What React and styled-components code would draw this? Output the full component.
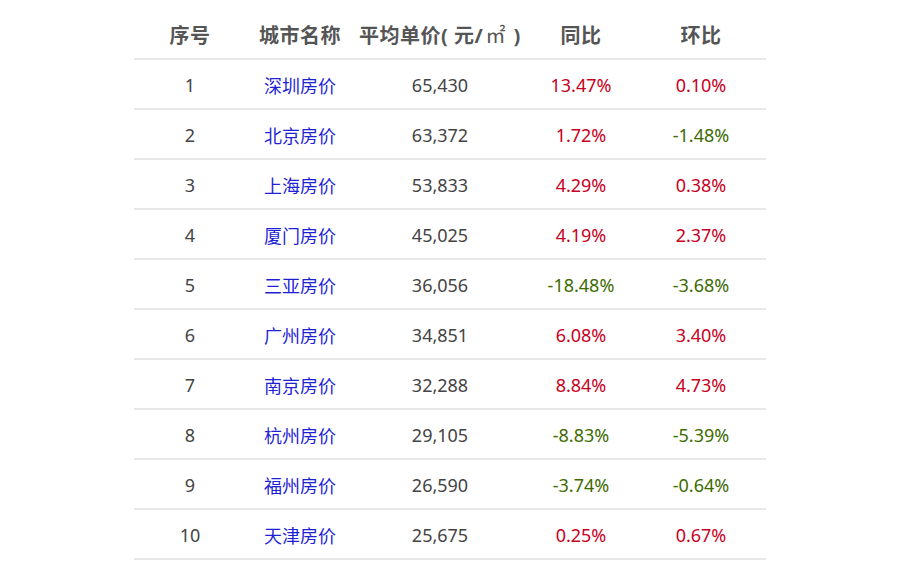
import styled, { createGlobalStyle } from "styled-components";

const rows = [
  [1, "深圳房价", "65,430", "13.47%", "0.10%"],
  [2, "北京房价", "63,372", "1.72%", "-1.48%"],
  [3, "上海房价", "53,833", "4.29%", "0.38%"],
  [4, "厦门房价", "45,025", "4.19%", "2.37%"],
  [5, "三亚房价", "36,056", "-18.48%", "-3.68%"],
  [6, "广州房价", "34,851", "6.08%", "3.40%"],
  [7, "南京房价", "32,288", "8.84%", "4.73%"],
  [8, "杭州房价", "29,105", "-8.83%", "-5.39%"],
  [9, "福州房价", "26,590", "-3.74%", "-0.64%"],
  [10, "天津房价", "25,675", "0.25%", "0.67%"],
];

const App = () => (
  <>
    <GlobalStyle />
    <Page>
      <Table>
        <HeadRow>
          <HeadCell>序号</HeadCell>
          <HeadCell>城市名称</HeadCell>
          <HeadCell>
            平均单价( 元/<Unit>㎡</Unit> )
          </HeadCell>
          <HeadCell>同比</HeadCell>
          <HeadCell>环比</HeadCell>
        </HeadRow>
        {rows.map(([n, city, price, yoy, mom]) => (
          <Row key={n}>
            <Cell>{n}</Cell>
            <Cell>
              <CityLink href="#">{city}</CityLink>
            </Cell>
            <Cell>{price}</Cell>
            <Change $down={yoy.startsWith("-")}>{yoy}</Change>
            <Change $down={mom.startsWith("-")}>{mom}</Change>
          </Row>
        ))}
      </Table>
    </Page>
  </>
);

export default App;

const GlobalStyle = createGlobalStyle`
  body {
    margin: 0;
    background: #fff;
    font-family: "Noto Sans", "Noto Sans CJK SC", sans-serif;
  }
`;

const Page = styled.div`
  width: 900px;
  height: 576px;
  padding-top: 10px;
  padding-left: 134px;
  box-sizing: border-box;
`;

const Table = styled.div`
  width: 632px;
`;

const HeadRow = styled.div`
  display: grid;
  grid-template-columns: 112px 108px 172px 110px 130px;
  height: 48px;
  align-items: center;
  border-bottom: 2px solid #e8e8e8;
`;

const HeadCell = styled.div`
  text-align: center;
  font-size: 20px;
  font-weight: 700;
  color: #555;
  white-space: nowrap;
  letter-spacing: 0.5px;
`;

const Unit = styled.span`
  font-family: "Liberation Serif", "Noto Sans CJK SC", serif;
  font-weight: 400;
  padding: 0 2px;
`;

const Row = styled.div`
  display: grid;
  grid-template-columns: 112px 108px 172px 110px 130px;
  height: 50px;
  padding-top: 2px;
  box-sizing: border-box;
  align-items: center;
  border-bottom: 2px solid #e8e8e8;
`;

const Cell = styled.div`
  text-align: center;
  font-size: 18px;
  color: #444;
`;

const CityLink = styled.a`
  color: #1f1fd6;
  text-decoration: none;
`;

const Change = styled(Cell)`
  color: ${(p) => (p.$down ? "#3e6b00" : "#c8001e")};
`;
